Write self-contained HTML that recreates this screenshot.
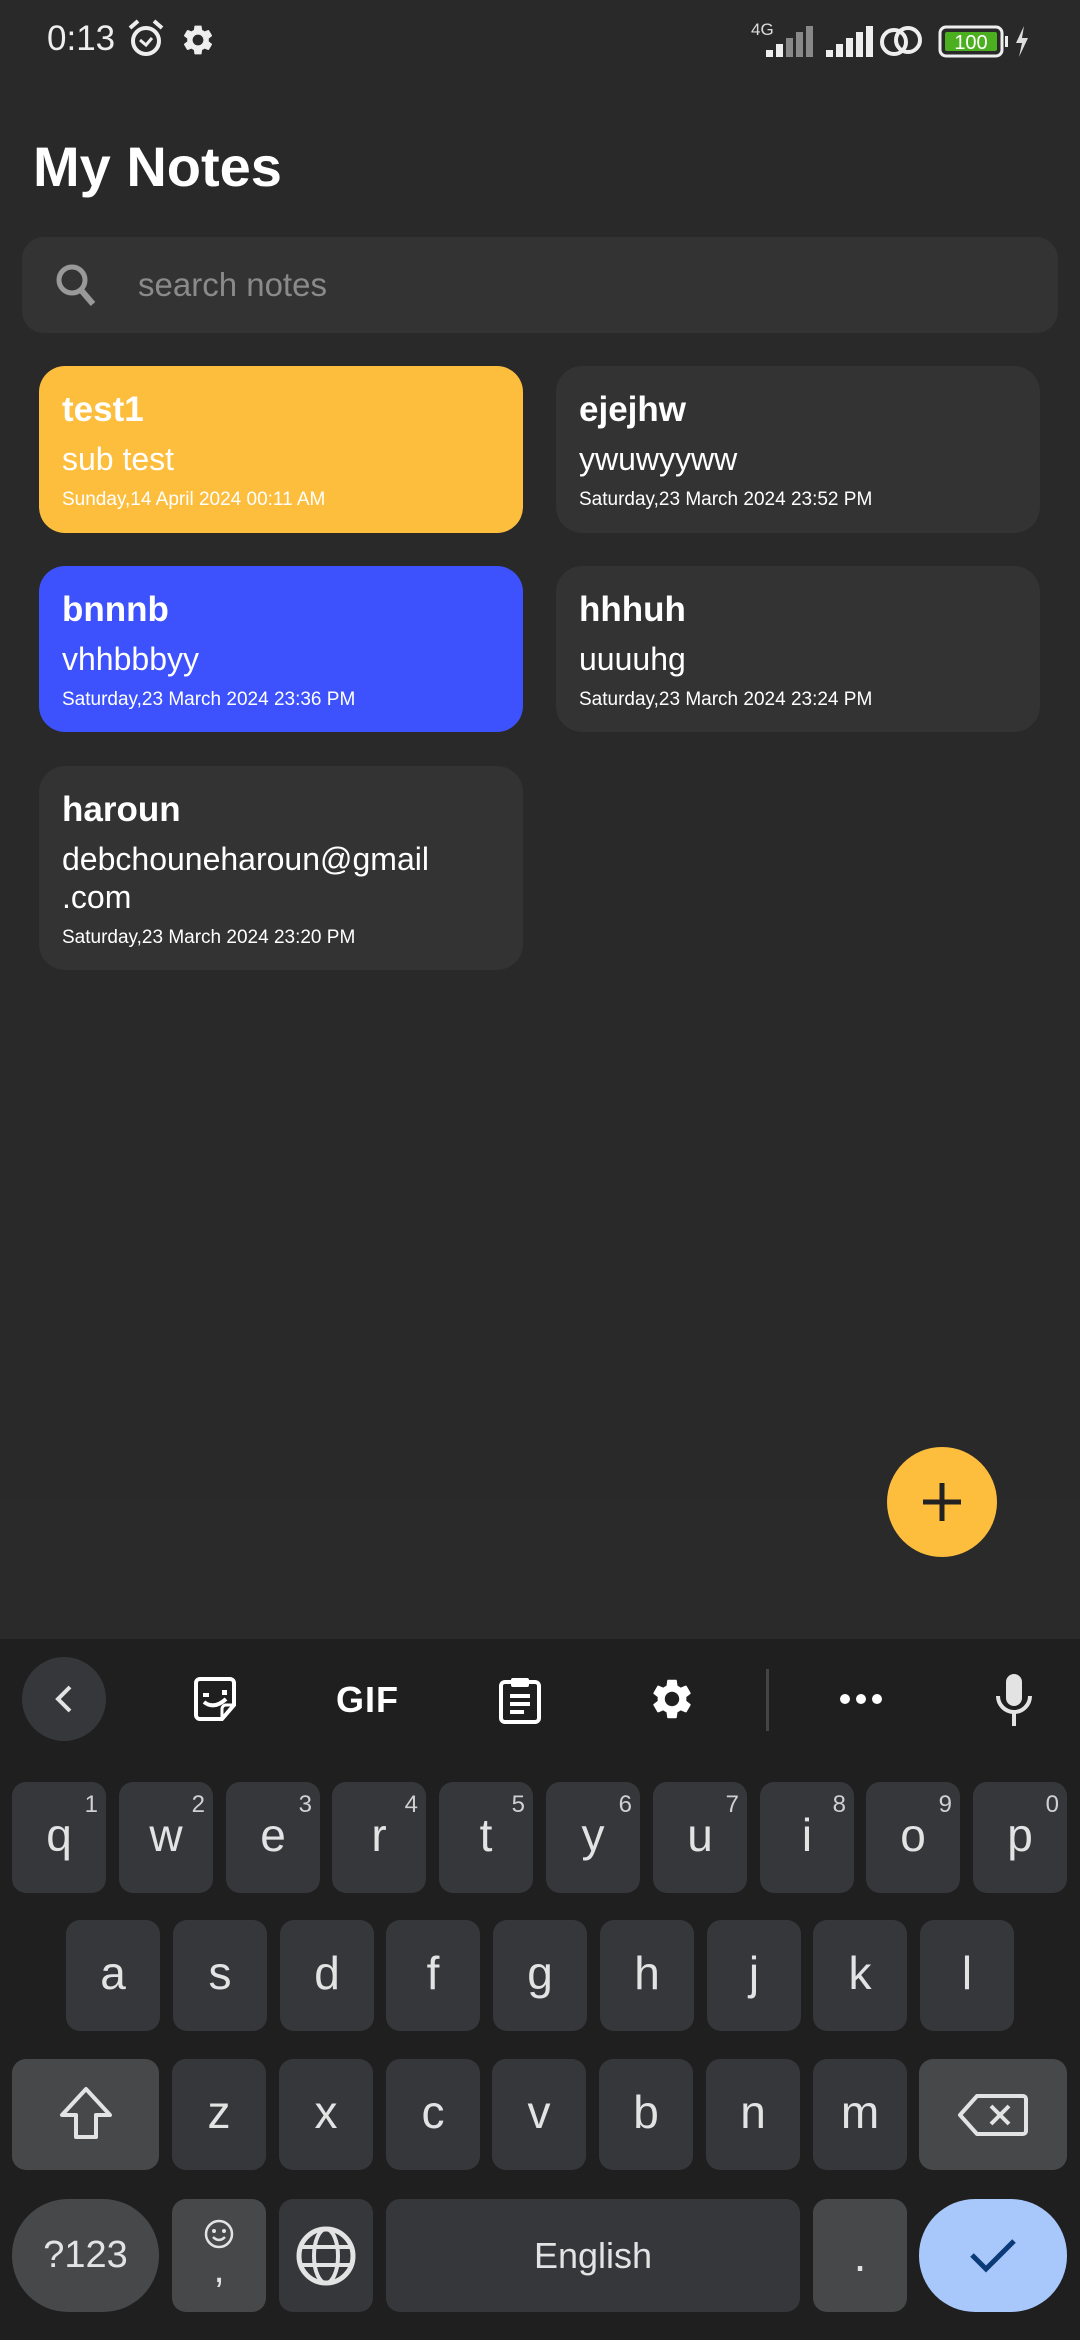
<!DOCTYPE html>
<html><head><meta charset="utf-8"><style>
*{margin:0;padding:0;box-sizing:border-box}
body{width:1080px;height:2340px;background:#292929;position:relative;overflow:hidden;font-family:"Liberation Sans",sans-serif;color:#fff}
.a{position:absolute}
.card{position:absolute;border-radius:26px;width:484px}
.card .t{position:absolute;left:23px;font-weight:bold;font-size:35px}
.card .s{position:absolute;left:23px;font-size:32px;line-height:38px}
.card .d{position:absolute;left:23px;font-size:19px}
.k{position:absolute;width:94px;height:111px;background:#36373b;border-radius:14px;color:#e3e3e3;font-size:46px;text-align:center;line-height:106px}
.k sup{position:absolute;right:8px;top:-30px;font-size:24px;color:#d0d0d0}
.sp{background:#464849}
</style></head><body>
<div class="a" style="left:47px;top:19px;font-size:35px;color:#eee">0:13</div>
<svg class="a" style="left:126px;top:18px" width="40" height="42" viewBox="0 0 40 42"><circle cx="20" cy="23" r="13" fill="none" stroke="#eee" stroke-width="4"/><path d="M14 22l6 5 6-7" fill="none" stroke="#eee" stroke-width="3"/><path d="M4 10l8-7M36 10l-8-7" stroke="#eee" stroke-width="4"/></svg>
<svg class="a" style="left:180px;top:22px" width="36" height="36" viewBox="0 0 24 24"><path fill="#eee" d="M19.14 12.94c.04-.3.06-.61.06-.94 0-.32-.02-.64-.07-.94l2.03-1.58c.18-.14.23-.41.12-.61l-1.92-3.32c-.12-.22-.37-.29-.59-.22l-2.39.96c-.5-.38-1.03-.7-1.62-.94l-.36-2.54c-.04-.24-.24-.41-.48-.41h-3.84c-.24 0-.43.17-.47.41l-.36 2.54c-.59.24-1.13.57-1.62.94l-2.39-.96c-.22-.08-.47 0-.59.22L2.74 8.87c-.12.21-.08.47.12.61l2.03 1.58c-.05.3-.09.63-.09.94s.02.64.07.94l-2.03 1.58c-.18.14-.23.41-.12.61l1.92 3.32c.12.22.37.29.59.22l2.39-.96c.5.38 1.03.7 1.62.94l.36 2.54c.05.24.24.41.48.41h3.84c.24 0 .44-.17.47-.41l.36-2.54c.59-.24 1.13-.56 1.62-.94l2.39.96c.22.08.47 0 .59-.22l1.92-3.32c.12-.22.07-.47-.12-.61l-2.01-1.58zM12 15.6c-1.98 0-3.6-1.62-3.6-3.6s1.62-3.6 3.6-3.6 3.6 1.62 3.6 3.6-1.62 3.6-3.6 3.6z"/></svg>
<div class="a" style="left:751px;top:20px;font-size:17px;color:#ddd">4G</div>
<svg class="a" style="left:746px;top:24px" width="330" height="34" viewBox="0 0 330 34">
<rect x="20" y="26" width="7" height="7" fill="#eee"/><rect x="30" y="20" width="7" height="13" fill="#eee"/><rect x="40" y="14" width="7" height="19" fill="#888"/><rect x="50" y="8" width="7" height="25" fill="#888"/><rect x="60" y="2" width="7" height="31" fill="#888"/>
<rect x="80" y="26" width="7" height="7" fill="#eee"/><rect x="90" y="20" width="7" height="13" fill="#eee"/><rect x="100" y="14" width="7" height="19" fill="#eee"/><rect x="110" y="8" width="7" height="25" fill="#eee"/><rect x="120" y="2" width="7" height="31" fill="#eee"/>
<circle cx="148" cy="18" r="12" fill="none" stroke="#eee" stroke-width="4"/><circle cx="162" cy="16" r="12" fill="none" stroke="#eee" stroke-width="4"/>
<rect x="194" y="3" width="62" height="29" rx="6" fill="none" stroke="#eee" stroke-width="3"/><rect x="199" y="8" width="52" height="19" rx="2" fill="#4caf1f"/><text x="225" y="25" font-size="20" fill="#fff" text-anchor="middle" font-family="Liberation Sans">100</text><rect x="259" y="12" width="3" height="11" fill="#eee"/>
<path d="M278 2l-8 17h6l-3 14 9-19h-6z" fill="#ddd"/></svg>
<div class="a" style="left:33px;top:134px;font-size:56px;font-weight:bold">My Notes</div>
<div class="a" style="left:22px;top:237px;width:1036px;height:96px;background:#333;border-radius:22px"></div>
<svg class="a" style="left:54px;top:262px" width="44" height="46" viewBox="0 0 44 46"><circle cx="18" cy="18" r="13" fill="none" stroke="#999" stroke-width="5"/><path d="M27 28l12 14" stroke="#999" stroke-width="6"/></svg>
<div class="a" style="left:138px;top:266px;font-size:33px;color:#8a8a8a">search notes</div>
<div class="card" style="left:39px;top:366px;height:167px;background:#fdbe3e"><div class="t" style="top:24px">test1</div><div class="s" style="top:74px">sub test</div><div class="d" style="top:123px">Sunday,14 April 2024 00:11 AM</div></div>
<div class="card" style="left:556px;top:366px;height:167px;background:#333"><div class="t" style="top:24px">ejejhw</div><div class="s" style="top:74px">ywuwyyww</div><div class="d" style="top:123px">Saturday,23 March 2024 23:52 PM</div></div>
<div class="card" style="left:39px;top:566px;height:166px;background:#3d52fd"><div class="t" style="top:24px">bnnnb</div><div class="s" style="top:74px">vhhbbbyy</div><div class="d" style="top:123px">Saturday,23 March 2024 23:36 PM</div></div>
<div class="card" style="left:556px;top:566px;height:166px;background:#333"><div class="t" style="top:24px">hhhuh</div><div class="s" style="top:74px">uuuuhg</div><div class="d" style="top:123px">Saturday,23 March 2024 23:24 PM</div></div>
<div class="card" style="left:39px;top:766px;height:204px;background:#333"><div class="t" style="top:24px">haroun</div><div class="s" style="top:74px">debchouneharoun@gmail<br>.com</div><div class="d" style="top:161px">Saturday,23 March 2024 23:20 PM</div></div>
<div class="a" style="left:0;top:1500px;width:1080px;height:140px;background:#2b2a2b"></div>
<div class="a" style="left:887px;top:1447px;width:110px;height:110px;border-radius:55px;background:#fdbe3e"></div>
<svg class="a" style="left:917px;top:1477px" width="50" height="50"><path d="M25 6v38M6 25h38" stroke="#222" stroke-width="5"/></svg>
<div class="a" style="left:0;top:1639px;width:1080px;height:701px;background:#1f1f1f"></div>
<div class="a" style="left:22px;top:1657px;width:84px;height:84px;border-radius:42px;background:#36373b"></div>
<svg class="a" style="left:44px;top:1679px" width="40" height="40"><path d="M26 8L14 20l12 12" fill="none" stroke="#e3e3e3" stroke-width="4"/></svg>
<svg class="a" style="left:192px;top:1675px" width="48" height="48" viewBox="0 0 48 48"><path d="M8 4h30a4 4 0 0 1 4 4v22L30 44H8a4 4 0 0 1-4-4V8a4 4 0 0 1 4-4z" fill="none" stroke="#fff" stroke-width="4"/><path d="M30 44V34a4 4 0 0 1 4-4h8" fill="none" stroke="#fff" stroke-width="3"/><rect x="11" y="18" width="6" height="4" fill="#fff"/><rect x="30" y="15" width="5" height="5" fill="#fff"/><path d="M12 27q10 8 22-3" fill="none" stroke="#fff" stroke-width="4"/></svg>
<div class="a" style="left:336px;top:1679px;font-size:36px;font-weight:bold;color:#fff;letter-spacing:1px">GIF</div>
<svg class="a" style="left:496px;top:1674px" width="48" height="52" viewBox="0 0 48 52"><rect x="5" y="8" width="38" height="40" rx="4" fill="none" stroke="#fff" stroke-width="4"/><rect x="15" y="4" width="18" height="9" rx="2" fill="#fff"/><path d="M14 22h20M14 30h20M14 38h14" stroke="#fff" stroke-width="4"/></svg>
<svg class="a" style="left:648px;top:1675px" width="48" height="48" viewBox="0 0 24 24"><path fill="#fff" d="M19.14 12.94c.04-.3.06-.61.06-.94 0-.32-.02-.64-.07-.94l2.03-1.58c.18-.14.23-.41.12-.61l-1.92-3.32c-.12-.22-.37-.29-.59-.22l-2.39.96c-.5-.38-1.03-.7-1.62-.94l-.36-2.54c-.04-.24-.24-.41-.48-.41h-3.84c-.24 0-.43.17-.47.41l-.36 2.54c-.59.24-1.13.57-1.62.94l-2.39-.96c-.22-.08-.47 0-.59.22L2.74 8.87c-.12.21-.08.47.12.61l2.03 1.58c-.05.3-.09.63-.09.94s.02.64.07.94l-2.03 1.58c-.18.14-.23.41-.12.61l1.92 3.32c.12.22.37.29.59.22l2.39-.96c.5.38 1.03.7 1.62.94l.36 2.54c.05.24.24.41.48.41h3.84c.24 0 .44-.17.47-.41l.36-2.54c.59-.24 1.13-.56 1.62-.94l2.39.96c.22.08.47 0 .59-.22l1.92-3.32c.12-.22.07-.47-.12-.61l-2.01-1.58zM12 15.6c-1.98 0-3.6-1.62-3.6-3.6s1.62-3.6 3.6-3.6 3.6 1.62 3.6 3.6-1.62 3.6-3.6 3.6z"/></svg>
<div class="a" style="left:766px;top:1669px;width:3px;height:62px;background:#444"></div>
<svg class="a" style="left:838px;top:1689px" width="46" height="20"><circle cx="7" cy="10" r="5" fill="#fff"/><circle cx="23" cy="10" r="5" fill="#fff"/><circle cx="39" cy="10" r="5" fill="#fff"/></svg>
<svg class="a" style="left:994px;top:1672px" width="40" height="56" viewBox="0 0 40 56"><rect x="12" y="2" width="16" height="32" rx="8" fill="#e3e3e3"/><path d="M4 24a16 16 0 0 0 32 0" fill="none" stroke="#e3e3e3" stroke-width="4"/><path d="M20 40v14" stroke="#e3e3e3" stroke-width="4"/></svg>
<div class="k" style="left:12px;top:1782px">q<sup>1</sup></div>
<div class="k" style="left:119px;top:1782px">w<sup>2</sup></div>
<div class="k" style="left:226px;top:1782px">e<sup>3</sup></div>
<div class="k" style="left:332px;top:1782px">r<sup>4</sup></div>
<div class="k" style="left:439px;top:1782px">t<sup>5</sup></div>
<div class="k" style="left:546px;top:1782px">y<sup>6</sup></div>
<div class="k" style="left:653px;top:1782px">u<sup>7</sup></div>
<div class="k" style="left:760px;top:1782px">i<sup>8</sup></div>
<div class="k" style="left:866px;top:1782px">o<sup>9</sup></div>
<div class="k" style="left:973px;top:1782px">p<sup>0</sup></div>
<div class="k" style="left:66px;top:1920px">a</div>
<div class="k" style="left:173px;top:1920px">s</div>
<div class="k" style="left:280px;top:1920px">d</div>
<div class="k" style="left:386px;top:1920px">f</div>
<div class="k" style="left:493px;top:1920px">g</div>
<div class="k" style="left:600px;top:1920px">h</div>
<div class="k" style="left:707px;top:1920px">j</div>
<div class="k" style="left:813px;top:1920px">k</div>
<div class="k" style="left:920px;top:1920px">l</div>
<div class="k sp" style="left:12px;top:2059px;width:147px"><svg style="margin-top:24px" width="64" height="64" viewBox="0 0 64 64"><path d="M32 6L8 32h14v22h20V32h14z" fill="none" stroke="#e3e3e3" stroke-width="4" stroke-linejoin="round"/></svg></div>
<div class="k" style="left:172px;top:2059px">z</div>
<div class="k" style="left:279px;top:2059px">x</div>
<div class="k" style="left:386px;top:2059px">c</div>
<div class="k" style="left:492px;top:2059px">v</div>
<div class="k" style="left:599px;top:2059px">b</div>
<div class="k" style="left:706px;top:2059px">n</div>
<div class="k" style="left:813px;top:2059px">m</div>
<div class="k sp" style="left:919px;top:2059px;width:148px"><svg style="margin-top:34px" width="72" height="44" viewBox="0 0 72 44"><path d="M20 3h46a3 3 0 0 1 3 3v32a3 3 0 0 1-3 3H20L3 22z" fill="none" stroke="#e3e3e3" stroke-width="4" stroke-linejoin="round"/><path d="M34 13l18 18M52 13L34 31" stroke="#e3e3e3" stroke-width="4"/></svg></div>
<div class="k sp" style="left:12px;top:2199px;width:147px;height:113px;border-radius:56px;font-size:38px;line-height:113px">?123</div>
<div class="k sp" style="left:172px;top:2199px;height:113px"><svg class="a" style="left:32px;top:20px" width="30" height="30"><circle cx="15" cy="15" r="13" fill="none" stroke="#e3e3e3" stroke-width="2.5"/><circle cx="10" cy="12" r="2" fill="#e3e3e3"/><circle cx="20" cy="12" r="2" fill="#e3e3e3"/><path d="M9 18q6 6 12 0" fill="none" stroke="#e3e3e3" stroke-width="2.5"/></svg><div class="a" style="left:0;width:94px;top:50px;line-height:40px;font-size:40px">,</div></div>
<div class="k" style="left:279px;top:2199px;height:113px"><svg style="margin-top:27px" width="60" height="60" viewBox="0 0 60 60"><circle cx="30" cy="30" r="27" fill="none" stroke="#e3e3e3" stroke-width="5"/><ellipse cx="30" cy="30" rx="12" ry="27" fill="none" stroke="#e3e3e3" stroke-width="4"/><path d="M5 21h50M5 39h50" stroke="#e3e3e3" stroke-width="4"/></svg></div>
<div class="k" style="left:386px;top:2199px;width:414px;height:113px;font-size:36px;line-height:113px">English</div>
<div class="k sp" style="left:813px;top:2199px;height:113px;line-height:113px">.</div>
<div class="k" style="left:919px;top:2199px;width:148px;height:113px;border-radius:56px;background:#a8c7fa"><svg style="margin-top:34px" width="50" height="44"><path d="M4 22l14 14L46 8" fill="none" stroke="#0b3a78" stroke-width="5"/></svg></div>
</body></html>
